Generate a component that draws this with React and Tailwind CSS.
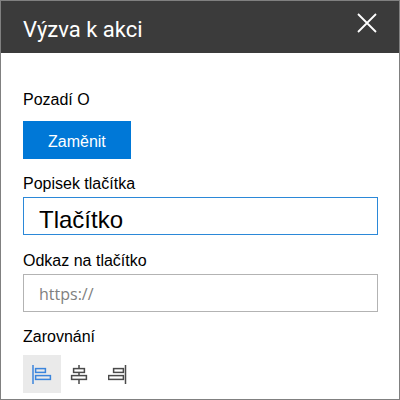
import { useState } from 'react';

const ALIGNMENTS = [
  { value: 'left', label: 'Zarovnat vlevo', line: 'M1 1v19', boxes: [{ x: 3, y: 4, w: 11 }, { x: 3, y: 11, w: 16 }] },
  { value: 'center', label: 'Zarovnat na střed', line: 'M9 1v3M9 9v2M9 16v4', boxes: [{ x: 3, y: 4, w: 12 }, { x: 1, y: 11, w: 16 }] },
  { value: 'right', label: 'Zarovnat vpravo', line: 'M17.5 1v19', boxes: [{ x: 5, y: 4, w: 11 }, { x: 0, y: 11, w: 16 }] },
];

function AlignIcon({ line, boxes }) {
  return (
    <svg width="20" height="20" viewBox="0 0 20 20" fill="none" stroke="currentColor" strokeWidth="1.5" aria-hidden="true">
      <path d={line} />
      {boxes.map((b) => (
        <rect key={b.y} x={b.x + 0.6} y={b.y + 0.6} width={b.w - 1.2} height="3.8" />
      ))}
    </svg>
  );
}

function TextField({ id, label, className, ...props }) {
  return (
    <div className="flex flex-col gap-[2px]">
      <label htmlFor={id} className="leading-[22px]">{label}</label>
      <input
        id={id}
        type="text"
        className={`h-[38px] w-full border bg-white px-[15px] outline-none ${className}`}
        {...props}
      />
    </div>
  );
}

export default function App() {
  const [caption, setCaption] = useState('Tlačítko');
  const [link, setLink] = useState('');
  const [align, setAlign] = useState('left');

  return (
    <main className="flex min-h-screen flex-col border border-[#808080] bg-white font-['Liberation_Sans',Arial,sans-serif] text-base text-black">
      <header className="flex h-13 items-center justify-between bg-[#3b3b3b] px-[22px] text-white">
        <h1 className="pt-1 font-[Roboto,sans-serif] text-[22px]">Výzva k akci</h1>
        <button type="button" aria-label="Zavřít" className="pb-2">
          <svg width="20" height="20" viewBox="0 0 20 20" fill="none" stroke="currentColor" strokeWidth="1.8">
            <path d="M1 1l18 18M19 1L1 19" />
          </svg>
        </button>
      </header>

      <div className="flex flex-col gap-[14px] pt-9 pr-[21px] pl-[22px]">
        <section className="flex flex-col items-start gap-[10px]">
          <h2 className="leading-[22px]">Pozadí O</h2>
          <button type="button" className="h-[38px] bg-[#0078d7] px-[25px] pt-1 text-white">Zaměnit</button>
        </section>

        <div className="flex flex-col gap-[15px]">
          <TextField
            id="caption"
            label="Popisek tlačítka"
            value={caption}
            onChange={(e) => setCaption(e.target.value)}
            className="border-[#2b88d8] pt-2 text-2xl"
          />
          <TextField
            id="link"
            label="Odkaz na tlačítko"
            value={link}
            placeholder="https://"
            onChange={(e) => setLink(e.target.value)}
            className="border-[#b3b3b3] pt-[2px] font-['Open_Sans',sans-serif] placeholder:text-[#808080]"
          />

          <section className="flex flex-col gap-2">
            <h2 className="leading-5">Zarovnání</h2>
            <div className="flex">
              {ALIGNMENTS.map((a) => (
                <button
                  key={a.value}
                  type="button"
                  aria-label={a.label}
                  aria-pressed={align === a.value}
                  onClick={() => setAlign(a.value)}
                  className={`flex size-[38px] items-center justify-center ${align === a.value ? 'bg-[#eaeaea] text-[#3b85dc]' : 'text-[#4a4a4a]'}`}
                >
                  <AlignIcon line={a.line} boxes={a.boxes} />
                </button>
              ))}
            </div>
          </section>
        </div>
      </div>
    </main>
  );
}
